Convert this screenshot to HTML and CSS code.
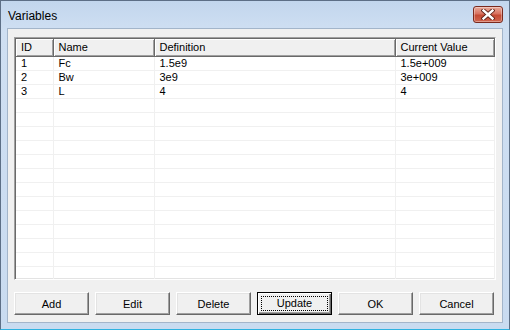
FILE: index.html
```html
<!DOCTYPE html>
<html lang="en">
<head>
<meta charset="UTF-8">
<title>Variables</title>
<link rel="stylesheet" href="styles.css">
</head>
<body>
<div class="window">
  <div class="titlebar">
    <span class="title">Variables</span>
    <button class="close-btn" title="Close">
      <svg width="14" height="11" viewBox="0 0 14 11">
        <path d="M2.5 1.5 L11.5 9.5 M11.5 1.5 L2.5 9.5" stroke="#5a1e14" stroke-width="4.2" stroke-linecap="square"/>
        <path d="M2.5 1.5 L11.5 9.5 M11.5 1.5 L2.5 9.5" stroke="#fff" stroke-width="2.4" stroke-linecap="square"/>
      </svg>
    </button>
  </div>
  <div class="client">
    <div class="list">
      <table class="grid">
        <thead>
          <tr>
            <th class="col-id">ID</th>
            <th class="col-name">Name</th>
            <th class="col-def">Definition</th>
            <th class="col-val">Current Value</th>
          </tr>
        </thead>
        <tbody>
          <tr><td>1</td><td>Fc</td><td>1.5e9</td><td>1.5e+009</td></tr>
          <tr><td>2</td><td>Bw</td><td>3e9</td><td>3e+009</td></tr>
          <tr><td>3</td><td>L</td><td>4</td><td>4</td></tr>
          <tr><td></td><td></td><td></td><td></td></tr>
          <tr><td></td><td></td><td></td><td></td></tr>
          <tr><td></td><td></td><td></td><td></td></tr>
          <tr><td></td><td></td><td></td><td></td></tr>
          <tr><td></td><td></td><td></td><td></td></tr>
          <tr><td></td><td></td><td></td><td></td></tr>
          <tr><td></td><td></td><td></td><td></td></tr>
          <tr><td></td><td></td><td></td><td></td></tr>
          <tr><td></td><td></td><td></td><td></td></tr>
          <tr><td></td><td></td><td></td><td></td></tr>
          <tr><td></td><td></td><td></td><td></td></tr>
          <tr><td></td><td></td><td></td><td></td></tr>
          <tr><td></td><td></td><td></td><td></td></tr>
          <tr><td></td><td></td><td></td><td></td></tr>
        </tbody>
      </table>
    </div>
    <div class="buttons">
      <button class="btn">Add</button>
      <button class="btn">Edit</button>
      <button class="btn">Delete</button>
      <button class="btn default"><span class="focus">Update</span></button>
      <button class="btn">OK</button>
      <button class="btn">Cancel</button>
    </div>
  </div>
</div>
</body>
</html>
```

FILE: styles.css
```css
html, body {
  margin: 0;
  padding: 0;
  background: #fff;
}
.window {
  width: 510px;
  height: 330px;
  box-sizing: border-box;
  border: 1px solid #5d6f86;
  border-bottom-color: #2fb2e0;
  background: linear-gradient(#c2d6ed, #cfdff2 30px, #c9dbf0);
  display: flex;
  flex-direction: column;
  font-family: "Liberation Sans", Arial, sans-serif;
}
.titlebar {
  height: 27px;
  display: flex;
  align-items: flex-start;
  justify-content: space-between;
  padding: 0 6px 0 7px;
}
.title {
  font-size: 12px;
  color: #000;
  margin-top: 8px;
}
.close-btn {
  width: 30px;
  height: 17px;
  margin-top: 5px;
  padding: 0;
  border: 1px solid #7a2a1e;
  border-radius: 3px;
  background: linear-gradient(#e9ab9b, #d87260 45%, #c54a33 55%, #d06650);
  box-shadow: inset 0 0 0 1px rgba(255, 255, 255, 0.35);
  display: flex;
  align-items: center;
  justify-content: center;
}
.client {
  flex: 1;
  margin: 0 6px 6px;
  border: 1px solid #a3b5ca;
  background: #f0f0f0;
  padding: 8px 6px 6px;
  display: flex;
  flex-direction: column;
}
.list {
  height: 243px;
  box-sizing: border-box;
  border: 1px solid;
  border-color: #a0a0a0 #fff #fff #a0a0a0;
  box-shadow: inset 1px 1px 0 #696969, inset -1px -1px 0 #e3e3e3;
  padding: 1px;
  background: #fff;
  overflow: hidden;
}
.grid {
  border-collapse: collapse;
  table-layout: fixed;
  width: 478px;
  font-size: 11px;
  color: #000;
}
.grid th {
  height: 17px;
  box-sizing: border-box;
  padding: 0 0 0 5px;
  font-weight: normal;
  text-align: left;
  background: #f0f0f0;
  border-right: 1px solid #696969;
  border-bottom: 1px solid #696969;
  box-shadow: inset 1px 1px 0 #fff, inset -1px -1px 0 #a0a0a0;
  white-space: nowrap;
}
.col-id { width: 37px; }
.col-name { width: 101px; }
.col-def { width: 241px; }
.col-val { width: 99px; }
.grid td {
  height: 14px;
  box-sizing: border-box;
  padding: 0 0 0 5px;
  border-right: 1px solid #f0f0f0;
  border-bottom: 1px solid #f0f0f0;
  line-height: 13px;
  white-space: nowrap;
}
.buttons {
  display: flex;
  gap: 6px;
  margin-top: 12px;
}
.btn {
  width: 75px;
  height: 23px;
  box-sizing: border-box;
  padding: 0;
  font-family: "Liberation Sans", Arial, sans-serif;
  font-size: 11px;
  color: #000;
  background: #f0f0f0;
  border: 1px solid;
  border-color: #fff #696969 #696969 #fff;
  box-shadow: inset -1px -1px 0 #a0a0a0, inset 1px 1px 0 #e3e3e3;
}
.btn.default {
  border: 1px solid #000;
  box-shadow: inset 1px 1px 0 #fff, inset -1px -1px 0 #696969, inset -2px -2px 0 #a0a0a0;
  padding: 3px;
}
.btn .focus {
  display: block;
  height: 100%;
  box-sizing: border-box;
  border: 1px dotted #000;
  line-height: 13px;
}
```
